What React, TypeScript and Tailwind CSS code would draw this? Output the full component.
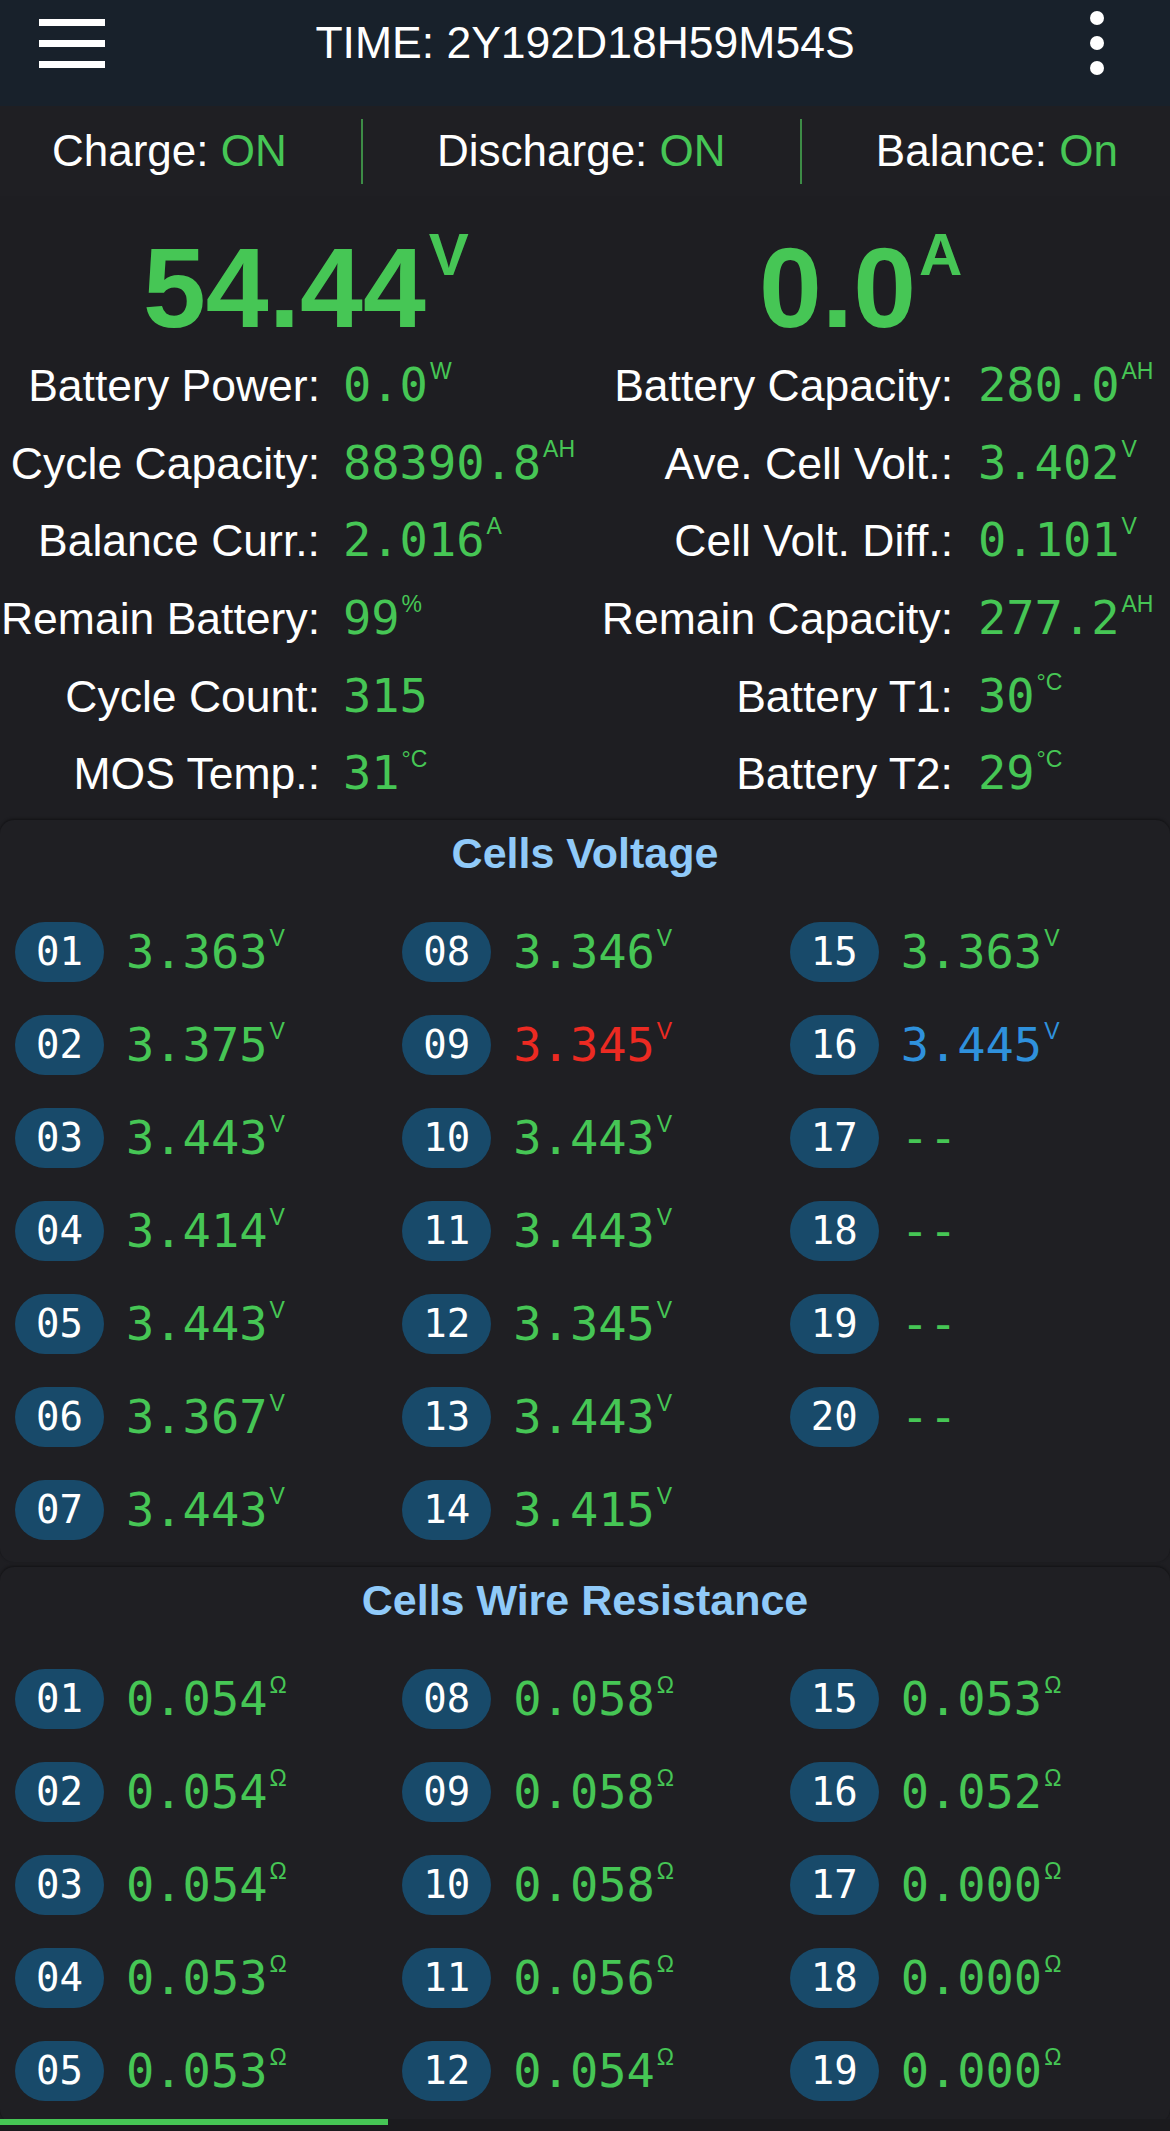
import React from 'react';

const GREEN = 'text-[#46c655]';

type Cell = { no: string; value: string; color?: string };

const voltages: Cell[] = [
  { no: '01', value: '3.363' },
  { no: '02', value: '3.375' },
  { no: '03', value: '3.443' },
  { no: '04', value: '3.414' },
  { no: '05', value: '3.443' },
  { no: '06', value: '3.367' },
  { no: '07', value: '3.443' },
  { no: '08', value: '3.346' },
  { no: '09', value: '3.345', color: 'text-[#ec2a22]' },
  { no: '10', value: '3.443' },
  { no: '11', value: '3.443' },
  { no: '12', value: '3.345' },
  { no: '13', value: '3.443' },
  { no: '14', value: '3.415' },
  { no: '15', value: '3.363' },
  { no: '16', value: '3.445', color: 'text-[#2f91dc]' },
  { no: '17', value: '--' },
  { no: '18', value: '--' },
  { no: '19', value: '--' },
  { no: '20', value: '--' },
];

// only the rows that fit above the tab bar
const resistances: Cell[] = [
  { no: '01', value: '0.054' },
  { no: '02', value: '0.054' },
  { no: '03', value: '0.054' },
  { no: '04', value: '0.053' },
  { no: '05', value: '0.053' },
  { no: '08', value: '0.058' },
  { no: '09', value: '0.058' },
  { no: '10', value: '0.058' },
  { no: '11', value: '0.056' },
  { no: '12', value: '0.054' },
  { no: '15', value: '0.053' },
  { no: '16', value: '0.052' },
  { no: '17', value: '0.000' },
  { no: '18', value: '0.000' },
  { no: '19', value: '0.000' },
];

const leftStats = [
  { label: 'Battery Power:', value: '0.0', unit: 'W' },
  { label: 'Cycle Capacity:', value: '88390.8', unit: 'AH' },
  { label: 'Balance Curr.:', value: '2.016', unit: 'A' },
  { label: 'Remain Battery:', value: '99', unit: '%' },
  { label: 'Cycle Count:', value: '315', unit: '' },
  { label: 'MOS Temp.:', value: '31', unit: '°C' },
];

const rightStats = [
  { label: 'Battery Capacity:', value: '280.0', unit: 'AH' },
  { label: 'Ave. Cell Volt.:', value: '3.402', unit: 'V' },
  { label: 'Cell Volt. Diff.:', value: '0.101', unit: 'V' },
  { label: 'Remain Capacity:', value: '277.2', unit: 'AH' },
  { label: 'Battery T1:', value: '30', unit: '°C' },
  { label: 'Battery T2:', value: '29', unit: '°C' },
];

function Unit({ children }: { children: React.ReactNode }) {
  return (
    <span className="relative -top-[22px] ml-[2px] font-['Liberation_Sans_Narrow','Liberation_Sans',sans-serif] text-[23px]">
      {children}
    </span>
  );
}

function StatColumn({ rows, labelWidth, gap }: { rows: typeof leftStats; labelWidth: string; gap: string }) {
  return (
    <div className="flex flex-col">
      {rows.map(r => (
        <div key={r.label} className="flex h-[77.7px] items-baseline leading-[77.7px]">
          <span className={`${labelWidth} shrink-0 whitespace-nowrap text-right text-[44.5px] text-white`}>{r.label}</span>
          <span className={`${gap} whitespace-nowrap font-['DejaVu_Sans_Mono',monospace] text-[47px] ${GREEN}`}>
            {r.value}
            {r.unit && <Unit>{r.unit}</Unit>}
          </span>
        </div>
      ))}
    </div>
  );
}

function CellGrid({ title, cells, unit, rows }: { title: string; cells: Cell[]; unit: string; rows: string }) {
  return (
    <div className="rounded-[14px] bg-[#1f1f23] px-[4px] pb-[6px] pt-[11px] shadow-[0_-1px_3px_rgba(0,0,0,0.45)]">
      <h2 className="h-[44px] text-center text-[43px] font-bold leading-[44px] text-[#90caf9]">{title}</h2>
      <div className={`mt-[30px] grid grid-flow-col grid-cols-3 ${rows}`}>
        {cells.map(c => (
          <div key={c.no} className="flex h-[93px] items-center pl-[11px]">
            <span className="flex h-[60px] w-[89px] items-center justify-center rounded-full bg-[#184a6a] font-['DejaVu_Sans_Mono',monospace] text-[39px] leading-none text-white">
              {c.no}
            </span>
            <span className={`ml-[22px] font-['DejaVu_Sans_Mono',monospace] text-[47px] leading-none ${c.color ?? GREEN}`}>
              {c.value}
              {c.value !== '--' && <Unit>{unit}</Unit>}
            </span>
          </div>
        ))}
      </div>
    </div>
  );
}

export default function App() {
  return (
    <div className="flex h-[2131px] w-[1170px] flex-col overflow-hidden bg-[#1e1e22] font-['Liberation_Sans',Arial,sans-serif]">
      {/* Header */}
      <header className="h-[106px] shrink-0 bg-[#18212b]">
        <div className="grid h-[86px] grid-cols-[1fr_auto_1fr] items-center px-[39px]">
          <div className="flex flex-col gap-[14px]">
            <span className="h-[7px] w-[66px] bg-white" />
            <span className="h-[7px] w-[66px] bg-white" />
            <span className="h-[7px] w-[66px] bg-white" />
          </div>
          <h1 className="text-[44.5px] text-white">TIME: 2Y192D18H59M54S</h1>
          <div className="mr-[27px] flex flex-col items-end gap-[11px]">
            <span className="h-[14px] w-[14px] rounded-full bg-white" />
            <span className="h-[14px] w-[14px] rounded-full bg-white" />
            <span className="h-[14px] w-[14px] rounded-full bg-white" />
          </div>
        </div>
      </header>

      {/* Switch status */}
      <div className="flex h-[90px] shrink-0 items-center justify-between bg-[#1f1f23] px-[52px] text-[44px] text-white">
        <span>Charge: <span className={GREEN}>ON</span></span>
        <span className="h-[65px] w-[2px] bg-[#3d8c46]" />
        <span>Discharge: <span className={GREEN}>ON</span></span>
        <span className="h-[65px] w-[2px] bg-[#3d8c46]" />
        <span>Balance: <span className={GREEN}>On</span></span>
      </div>

      {/* Main */}
      <main className="flex-1 overflow-hidden">
        <div className="mt-[36px] grid h-[113px] grid-cols-2">
          <div className={`flex items-start pl-[143px] text-[113px] font-bold leading-none ${GREEN}`}>
            <span>54.44</span>
            <span className="-mt-[7px] ml-[3px] text-[60px]">V</span>
          </div>
          <div className={`flex items-start pl-[174px] text-[113px] font-bold leading-none ${GREEN}`}>
            <span>0.0</span>
            <span className="-mt-[7px] ml-[3px] text-[60px]">A</span>
          </div>
        </div>

        <div className="mt-[1px] grid grid-cols-2">
          <StatColumn rows={leftStats} labelWidth="w-[320px]" gap="ml-[23px]" />
          <StatColumn rows={rightStats} labelWidth="w-[368px]" gap="ml-[25px]" />
        </div>

        <div className="mt-[8px] flex flex-col gap-[5px]">
          <CellGrid title="Cells Voltage" cells={voltages} unit="V" rows="grid-rows-7" />
          <CellGrid title="Cells Wire Resistance" cells={resistances} unit="Ω" rows="grid-rows-5" />
        </div>
      </main>

      {/* Tab indicator */}
      <div className="h-[12px] shrink-0 bg-[#1b1b1e]">
        <div className="h-[6px] w-[388px] bg-[#46c655]" />
      </div>
    </div>
  );
}
